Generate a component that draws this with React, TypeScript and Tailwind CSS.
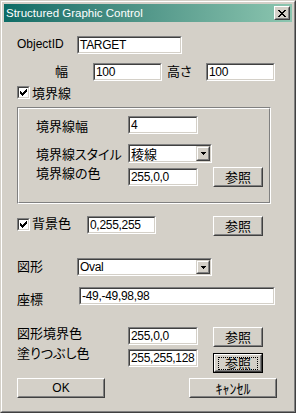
import React from "react";

const LAT = "font-['Liberation_Sans',sans-serif] text-[12px] leading-[16px] text-black whitespace-nowrap";
const JP = "font-['Noto_Sans_CJK_JP',sans-serif] text-[13px] leading-[16px] text-black whitespace-nowrap [font-feature-settings:'palt']";
const FIELDTXT = "font-['Liberation_Sans',sans-serif] text-[12px] leading-[14px] text-black tracking-[-0.3px]";
const FIELDJP = "font-['Noto_Sans_CJK_JP',sans-serif] text-[13px] leading-[13px] text-black";

function Field({ className = "", children }: { className?: string; children?: React.ReactNode }) {
  return (
    <div className={`shrink-0 border border-t-[#808080] border-l-[#808080] border-r-white border-b-white ${className}`}>
      <div className="h-full w-full border border-t-[#404040] border-l-[#404040] border-r-[#d4d0c8] border-b-[#d4d0c8] bg-white flex items-center pl-[1px] overflow-hidden whitespace-nowrap">
        {children}
      </div>
    </div>
  );
}

function Arrow() {
  return (
    <svg width="5" height="3" viewBox="0 0 5 3" shapeRendering="crispEdges">
      <rect x="0" y="0" width="5" height="1" fill="#000" />
      <rect x="1" y="1" width="3" height="1" fill="#000" />
      <rect x="2" y="2" width="1" height="1" fill="#000" />
    </svg>
  );
}

function Combo({ className = "", children }: { className?: string; children?: React.ReactNode }) {
  return (
    <div className={`shrink-0 border border-t-[#808080] border-l-[#808080] border-r-white border-b-white ${className}`}>
      <div className="h-full w-full border border-t-[#404040] border-l-[#404040] border-r-[#d4d0c8] border-b-[#d4d0c8] bg-white flex items-center whitespace-nowrap">
        <div className="flex-1 h-full pl-[1px] flex items-center">{children}</div>
        <div className="h-full w-[14px] border border-t-[#d4d0c8] border-l-[#d4d0c8] border-r-[#404040] border-b-[#404040]">
          <div className="h-full w-full border border-t-white border-l-white border-r-[#808080] border-b-[#808080] bg-[#d4d0c8] flex items-center justify-center">
            <Arrow />
          </div>
        </div>
      </div>
    </div>
  );
}

function Check() {
  const px: [number, number][] = [
    [6, 0],
    [5, 1], [6, 1],
    [0, 2], [4, 2], [5, 2], [6, 2],
    [0, 3], [1, 3], [3, 3], [4, 3], [5, 3],
    [0, 4], [1, 4], [2, 4], [3, 4], [4, 4],
    [1, 5], [2, 5], [3, 5],
    [2, 6],
  ];
  return (
    <svg width="7" height="7" viewBox="0 0 7 7" shapeRendering="crispEdges">
      {px.map(([x, y], i) => (
        <rect key={i} x={x} y={y} width="1" height="1" fill="#000" />
      ))}
    </svg>
  );
}

function CheckBox({ className = "" }: { className?: string }) {
  return (
    <div className={`shrink-0 w-[13px] h-[13px] border border-t-[#808080] border-l-[#808080] border-r-white border-b-white ${className}`}>
      <div className="h-full w-full border border-t-[#404040] border-l-[#404040] border-r-[#d4d0c8] border-b-[#d4d0c8] bg-white flex items-center justify-center">
        <Check />
      </div>
    </div>
  );
}

function Btn({ className = "", children, focused = false }: { className?: string; children?: React.ReactNode; focused?: boolean }) {
  const inner = (
    <div className="h-full w-full border border-t-white border-l-white border-r-[#404040] border-b-[#404040]">
      <div className="h-full w-full border border-t-[#d4d0c8] border-l-[#d4d0c8] border-r-[#808080] border-b-[#808080] bg-[#d4d0c8] flex items-center justify-center">
        {focused ? (
          <div className="h-[13px] w-[40px] border border-dotted border-black flex items-center justify-center">{children}</div>
        ) : (
          children
        )}
      </div>
    </div>
  );
  if (focused) {
    return <div className={`shrink-0 border border-black ${className}`}>{inner}</div>;
  }
  return <div className={`shrink-0 ${className}`}>{inner}</div>;
}

function CloseX() {
  const rows = ["XX....XX", ".XX..XX.", "..XXXX..", "...XX...", "..XXXX..", ".XX..XX.", "XX....XX"];
  const rects: React.ReactNode[] = [];
  rows.forEach((r, y) =>
    r.split("").forEach((c, x) => {
      if (c === "X") rects.push(<rect key={`${x}-${y}`} x={x} y={y} width="1" height="1" fill="#000" />);
    })
  );
  return (
    <svg width="8" height="7" viewBox="0 0 8 7" shapeRendering="crispEdges">
      {rects}
    </svg>
  );
}

export default function App() {
  return (
    <div className="w-[296px] h-[417px] bg-white">
      <div className="w-[296px] h-[413px] border border-t-[#d4d0c8] border-l-[#d4d0c8] border-r-[#404040] border-b-[#404040] bg-[#d4d0c8]">
        <div className="h-full w-full border border-t-white border-l-white border-r-[#808080] border-b-[#808080] p-[2px] flex flex-col">
          {/* Title bar */}
          <div className="h-[18px] shrink-0 bg-gradient-to-r from-[#0b6c66] to-[#8cc6b0] flex items-center justify-between pl-[2px] pr-[2px]">
            <span className="font-['Liberation_Sans',sans-serif] text-[11.5px] leading-[16px] text-white whitespace-nowrap">
              Structured Graphic Control
            </span>
            <div className="w-[16px] h-[14px] border border-t-white border-l-white border-r-[#404040] border-b-[#404040]">
              <div className="h-full w-full border border-t-[#d4d0c8] border-l-[#d4d0c8] border-r-[#808080] border-b-[#808080] bg-[#d4d0c8] flex items-center justify-center">
                <CloseX />
              </div>
            </div>
          </div>

          {/* ObjectID */}
          <div className="mt-[14px] h-[18px] flex items-start pl-[13px]">
            <div className={`w-[60px] ${LAT}`}>ObjectID</div>
            <Field className="w-[105px] h-[18px]">
              <span className={FIELDTXT}>TARGET</span>
            </Field>
          </div>

          {/* 幅 高さ */}
          <div className="mt-[9px] h-[18px] flex items-start pl-[51px]">
            <div className={`w-[38px] ${JP}`}>幅</div>
            <Field className="w-[69px] h-[18px]">
              <span className={FIELDTXT}>100</span>
            </Field>
            <div className={`ml-[5px] w-[39px] ${JP}`}>高さ</div>
            <Field className="w-[69px] h-[18px]">
              <span className={FIELDTXT}>100</span>
            </Field>
          </div>

          {/* 境界線 checkbox */}
          <div className="mt-[5px] h-[13px] flex items-center pl-[13px]">
            <CheckBox />
            <div className={`ml-[2px] ${JP}`}>境界線</div>
          </div>

          {/* Group box */}
          <div className="mt-[8px] ml-[13px] w-[254px] h-[97px] shrink-0 border border-t-[#808080] border-l-[#808080] border-r-white border-b-white">
            <div className="h-full w-full border border-t-white border-l-white border-r-[#808080] border-b-[#808080] flex flex-col">
              <div className="mt-[7px] h-[18px] flex items-start pl-[17px]">
                <div className={`w-[92px] mt-[2px] ${JP}`}>境界線幅</div>
                <Field className="w-[70px] h-[18px]">
                  <span className={FIELDTXT}>4</span>
                </Field>
              </div>
              <div className="mt-[10px] h-[19px] flex items-start pl-[17px]">
                <div className={`w-[92px] mt-[2px] ${JP}`}>境界線スタイル</div>
                <Combo className="w-[84px] h-[19px]">
                  <span className={FIELDJP}>稜線</span>
                </Combo>
              </div>
              <div className="mt-[4px] h-[20px] flex items-start pl-[17px]">
                <div className={`w-[92px] mt-[-2px] ${JP}`}>境界線の色</div>
                <Field className="mt-[1px] w-[70px] h-[18px]">
                  <span className={FIELDTXT}>255,0,0</span>
                </Field>
                <Btn className="ml-[15px] w-[50px] h-[20px]">
                  <span className={JP}>参照</span>
                </Btn>
              </div>
            </div>
          </div>

          {/* 背景色 */}
          <div className="mt-[12px] h-[20px] flex items-start pl-[13px]">
            <CheckBox className="mt-[2px]" />
            <div className={`ml-[2px] w-[55px] mt-[-1px] ${JP}`}>背景色</div>
            <Field className="w-[69px] h-[18px]">
              <span className={FIELDTXT}>0,255,255</span>
            </Field>
            <Btn className="ml-[57px] w-[50px] h-[20px]">
              <span className={JP}>参照</span>
            </Btn>
          </div>

          {/* 図形 */}
          <div className="mt-[22px] h-[18px] flex items-start pl-[13px]">
            <div className={`w-[60px] ${JP}`}>図形</div>
            <Combo className="w-[135px] h-[18px]">
              <span className={FIELDTXT}>Oval</span>
            </Combo>
          </div>

          {/* 座標 */}
          <div className="mt-[11px] h-[18px] flex items-start pl-[13px]">
            <div className={`w-[62px] mt-[4px] ${JP}`}>座標</div>
            <Field className="w-[196px] h-[18px]">
              <span className={FIELDTXT}>-49,-49,98,98</span>
            </Field>
          </div>

          {/* 図形境界色 */}
          <div className="mt-[22px] h-[20px] flex items-start pl-[13px]">
            <div className={`w-[111px] mt-[-2px] ${JP}`}>図形境界色</div>
            <Field className="w-[70px] h-[18px]">
              <span className={FIELDTXT}>255,0,0</span>
            </Field>
            <Btn className="ml-[15px] w-[50px] h-[20px]">
              <span className={JP}>参照</span>
            </Btn>
          </div>

          {/* 塗りつぶし色 */}
          <div className="h-[26px] flex items-start pl-[13px]">
            <div className={`w-[111px] mt-[-2px] ${JP}`}>塗りつぶし色</div>
            <Field className="mt-[2px] w-[70px] h-[18px]">
              <span className={FIELDTXT}>255,255,128</span>
            </Field>
            <Btn focused className="mt-[6px] ml-[15px] w-[50px] h-[20px]">
              <span className={JP}>参照</span>
            </Btn>
          </div>

          {/* OK / Cancel */}
          <div className="mt-[5px] h-[20px] flex items-start pl-[13px]">
            <Btn className="w-[88px] h-[20px]">
              <span className={LAT}>OK</span>
            </Btn>
            <Btn className="ml-[84px] w-[88px] h-[20px]">
              <span className={`${JP} text-[14px]`}>ｷｬﾝｾﾙ</span>
            </Btn>
          </div>
        </div>
      </div>
    </div>
  );
}
